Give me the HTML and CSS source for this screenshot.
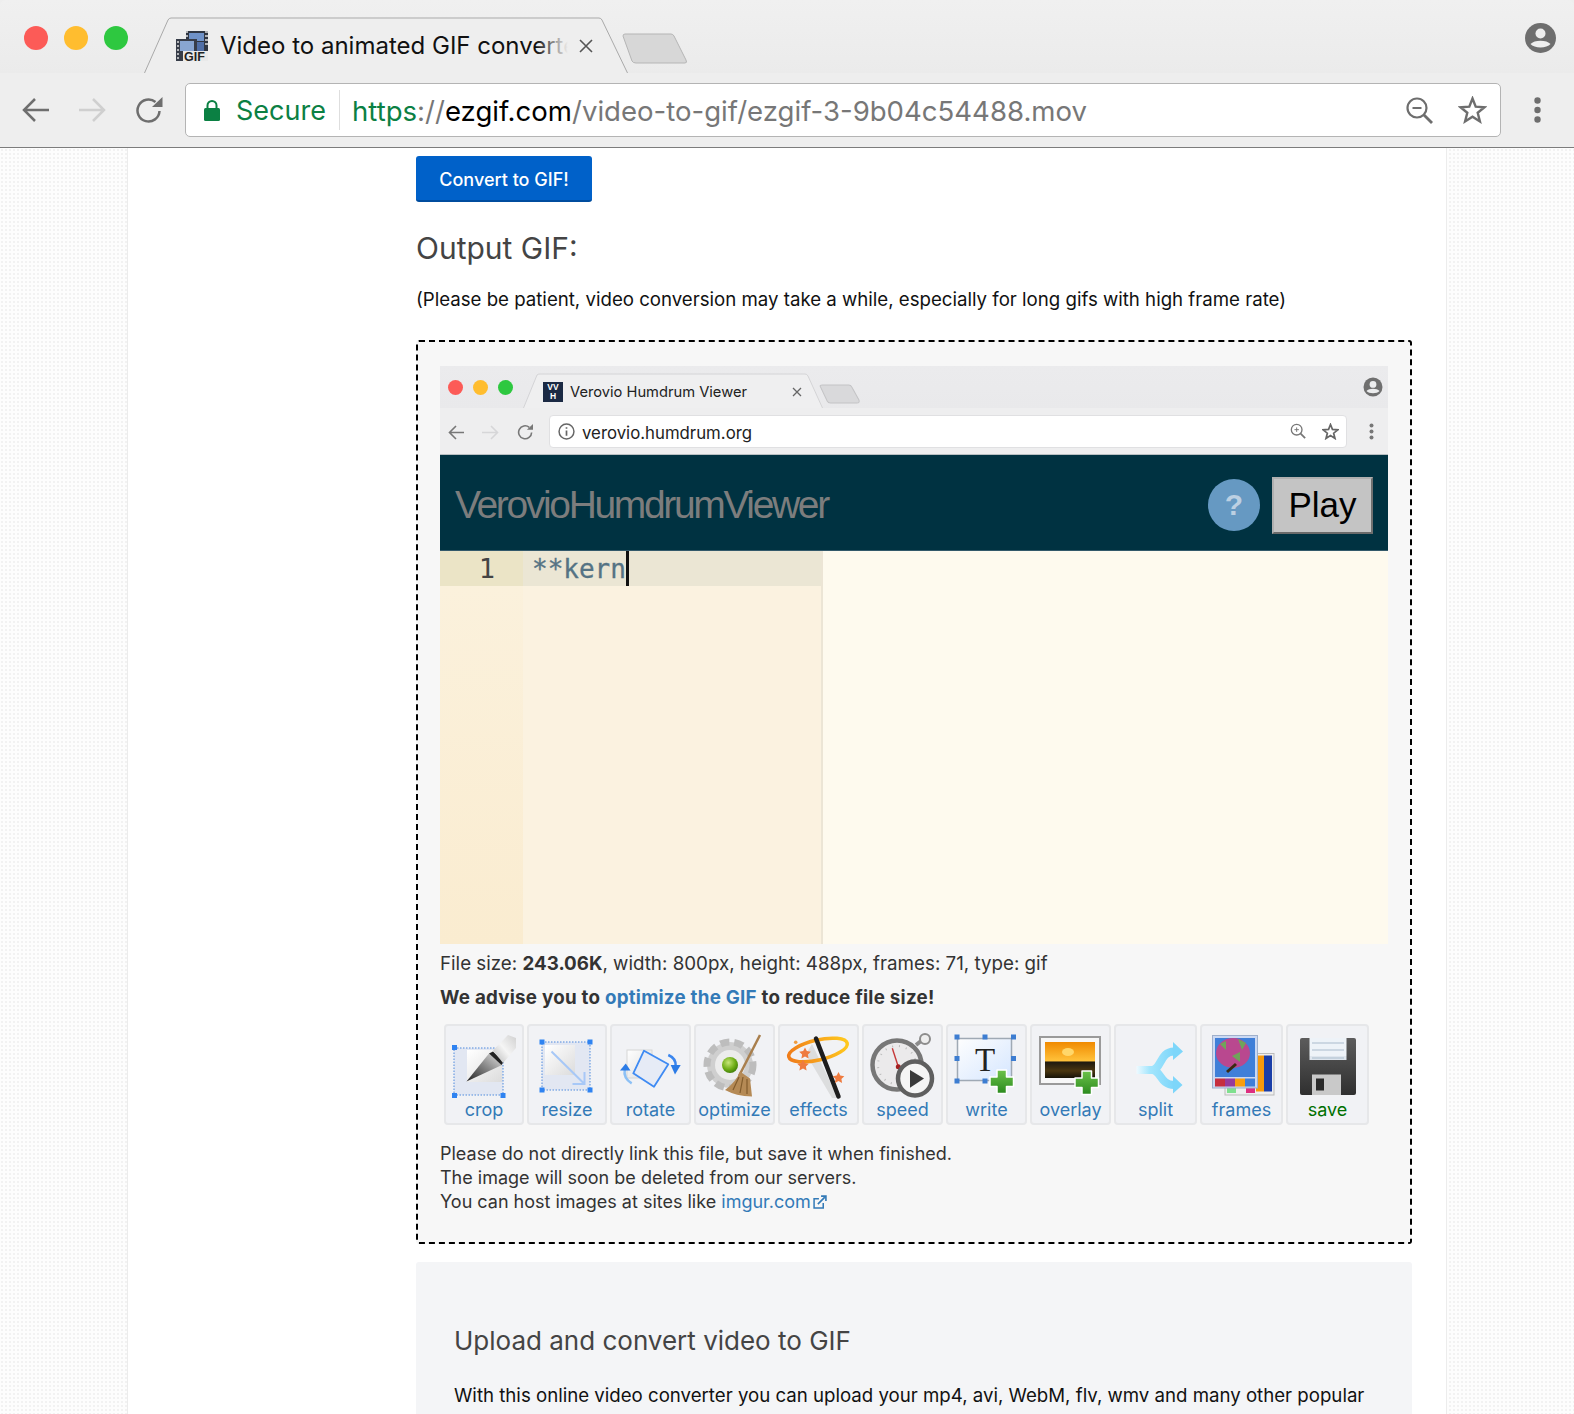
FILE: index.html
```html
<!DOCTYPE html>
<html lang="en">
<head>
<meta charset="utf-8">
<title>Video to animated GIF converter</title>
<link rel="stylesheet" href="styles.css">
</head>
<body>
<header class="chrome">
  <div class="tabstrip">
    <div class="lights"><i class="light red"></i><i class="light amber"></i><i class="light green"></i></div>
    <div class="tab">
      <svg class="tab-shape" width="484" height="56" viewBox="0 0 484 56"><path d="M0.500 56 L24 3 Q25 1 27 1 L455 1 Q457 1 458 3 L483.500 56" fill="#eeeeee" stroke="#a9a9a9"/></svg>
      <svg class="favicon" width="32" height="30" viewBox="0 0 32 30"><rect x="10" y="0" width="22" height="21" fill="#2f3642"/><rect x="13" y="2" width="15" height="8" fill="#6f92c8"/><rect x="13" y="11" width="15" height="9" fill="#4f6ea6"/><path d="M10 1 h2 M10 5 h2 M10 9 h2 M29 1 h3 M29 5 h3 M29 9 h3 M29 13 h3" stroke="#ddd" stroke-width="1.500"/><rect y="8" width="21" height="22" fill="#373d49"/><rect x="4" y="10" width="14" height="10" fill="#88a6d2"/><rect x="7" y="20" width="25" height="10" fill="#e9e9e9"/><path d="M1 11 h2 M1 15 h2 M1 19 h2 M1 23 h2 M1 27 h2" stroke="#ddd" stroke-width="1.500"/><text x="8" y="29.500" class="fav-text">GIF</text></svg>
      <span class="tab-title">Video to animated GIF converte</span>
      <span class="tab-fade"></span>
      <svg class="tab-x" width="14" height="14" viewBox="0 0 14 14"><path d="M1 1 L13 13 M13 1 L1 13" stroke="#555" stroke-width="1.600"/></svg>
    </div>
    <svg class="newtab" width="66" height="31" viewBox="0 0 66 31"><path d="M1 3 Q1 1 3 1 L49 1 Q51 1 52 3 L64 27 Q65.500 30 63 30 L14 30 Q11 30 10 28 Z" fill="#d7d7d7" stroke="#b5b5b5"/></svg>
    <svg class="profile" width="31" height="30" viewBox="0 0 31 30"><ellipse cx="15.500" cy="15" rx="15.500" ry="15" fill="#6e6e6e"/><circle cx="15.500" cy="10.500" r="5" fill="#eee"/><path d="M5.500 21 C9 16.500 22 16.500 25.500 21 C22 25.500 9 25.500 5.500 21 Z" fill="#eee"/></svg>
  </div>
  <div class="toolbar">
    <svg class="nav nav-back" width="27" height="24" viewBox="0 0 27 24"><path d="M27 12 H2.500 M13 1 L2 12 L13 23" fill="none" stroke="#6e6e6e" stroke-width="2.500"/></svg>
    <svg class="nav nav-off" width="27" height="24" viewBox="0 0 27 24"><path d="M0 12 H24.500 M14 1 L25 12 L14 23" fill="none" stroke="#cfcfcf" stroke-width="2.500"/></svg>
    <svg class="nav nav-reload" width="28" height="26" viewBox="0 0 28 26"><path d="M24.500 14 A11 11 0 1 1 20.500 5" fill="none" stroke="#6e6e6e" stroke-width="2.500"/><path d="M17 10 L27.500 10 L27.500 0 Z" fill="#6e6e6e"/></svg>
    <div class="omnibox">
      <svg class="lock" width="16" height="21" viewBox="0 0 16 21"><rect x="0" y="8" width="16" height="13" rx="1.500" fill="#0b8043"/><path d="M3.500 9 V5.500 A4.500 4.500 0 0 1 12.500 5.500 V9" fill="none" stroke="#0b8043" stroke-width="2"/></svg>
      <span class="secure">Secure</span>
      <span class="sep"></span>
      <span class="url"><span class="scheme">https</span><span class="dim">://</span><span class="host">ezgif.com</span><span class="dim">/video-to-gif/ezgif-3-9b04c54488.mov</span></span>
      <svg class="zoomicon" width="27" height="27" viewBox="0 0 27 27"><circle cx="11" cy="11" r="9.500" fill="none" stroke="#6e6e6e" stroke-width="2.200"/><path d="M6.500 11 H15.500" stroke="#6e6e6e" stroke-width="2"/><path d="M17.500 17.500 L26 26" stroke="#6e6e6e" stroke-width="2.800"/></svg>
      <svg class="star" width="29" height="28" viewBox="0 0 28 28"><path d="M14 2.500 L17.200 10.600 L26 11.200 L19.200 16.800 L21.400 25.400 L14 20.700 L6.600 25.400 L8.800 16.800 L2 11.200 L10.800 10.600 Z" fill="none" stroke="#6e6e6e" stroke-width="2.400"/></svg>
    </div>
    <svg class="dots" width="7" height="26" viewBox="0 0 7 26"><circle cx="3.500" cy="3.500" r="3.200" fill="#6e6e6e"/><circle cx="3.500" cy="13" r="3.200" fill="#6e6e6e"/><circle cx="3.500" cy="22.500" r="3.200" fill="#6e6e6e"/></svg>
  </div>
</header>
<div class="page">
  <main class="sheet">
    <div class="column">
      <button class="convert" type="button">Convert to GIF!</button>
      <h2 class="output-title">Output GIF:</h2>
      <p class="patience">(Please be patient, video conversion may take a while, especially for long gifs with high frame rate)</p>
      <section class="outfile">
        <div class="gif">
          <div class="g-strip">
            <div class="g-lights"><i class="g-light red"></i><i class="g-light amber"></i><i class="g-light green"></i></div>
            <div class="g-tab">
              <svg class="g-tab-shape" width="300" height="35" viewBox="0 0 300 35"><path d="M0.500 35 L14 2 Q15 1 17 1 L282 1 Q284 1 285 3 L299.500 35" fill="#efeff0" stroke="#d4d4d6"/></svg>
              <span class="g-fav"><span class="g-fav-t">VV</span><span class="g-fav-t">H</span></span>
              <span class="g-title">Verovio Humdrum Viewer</span>
              <svg class="g-x" width="10" height="10" viewBox="0 0 10 10"><path d="M1 1 L9 9 M9 1 L1 9" stroke="#666" stroke-width="1.300"/></svg>
            </div>
            <svg class="g-new" width="42" height="20" viewBox="0 0 41 20" preserveAspectRatio="none"><path d="M1 2 Q1 1 3 1 L29 1 Q31 1 32 3 L39 16 Q40 19 37 19 L11 19 Q9 19 8 17 Z" fill="#d9d9db" stroke="#c4c4c6"/></svg>
            <svg class="g-profile" width="20" height="20" viewBox="0 0 20 20"><circle cx="10" cy="10" r="9.500" fill="#6f6f6f"/><circle cx="10" cy="7.400" r="3.400" fill="#ecedee"/><path d="M3.500 14 C6 11 14 11 16.500 14 C14 17 6 17 3.500 14 Z" fill="#ecedee"/></svg>
          </div>
          <div class="g-bar">
            <svg class="g-nav" width="16" height="15" viewBox="0 0 16 15"><path d="M16 7.500 H1.500 M8 1 L1.500 7.500 L8 14" fill="none" stroke="#777" stroke-width="1.600"/></svg>
            <svg class="g-nav g-nav-off" width="17" height="15" viewBox="0 0 17 15"><path d="M0 7.500 H15.500 M9 1 L15.500 7.500 L9 14" fill="none" stroke="#d6d6d8" stroke-width="1.600"/></svg>
            <svg class="g-nav g-reload" width="17" height="16" viewBox="0 0 18 17"><path d="M15.500 9 A6.900 6.900 0 1 1 13 3.500" fill="none" stroke="#777" stroke-width="1.700"/><path d="M10.500 6 L17 6 L17 0 Z" fill="#777"/></svg>
            <div class="g-omni">
              <svg class="g-info" width="17" height="17" viewBox="0 0 16 16"><circle cx="8" cy="8" r="7" fill="none" stroke="#666" stroke-width="1.400"/><path d="M8 7 V12 M8 4 V5.500" stroke="#666" stroke-width="1.600"/></svg>
              <span class="g-url">verovio.humdrum.org</span>
              <svg class="g-zoom" width="16" height="16" viewBox="0 0 18 18"><circle cx="7.500" cy="7.500" r="6" fill="none" stroke="#777" stroke-width="1.500"/><path d="M5 7.500 H10 M7.500 5 V10" stroke="#777" stroke-width="1.100"/><path d="M12 12 L17 17" stroke="#777" stroke-width="2"/></svg>
              <svg class="g-star" width="17" height="17" viewBox="0 0 28 28"><path d="M14 2.500 L17.200 10.600 L26 11.200 L19.200 16.800 L21.400 25.400 L14 20.700 L6.600 25.400 L8.800 16.800 L2 11.200 L10.800 10.600 Z" fill="none" stroke="#666" stroke-width="2.800"/></svg>
            </div>
            <svg class="g-dots" width="5" height="17" viewBox="0 0 5 17"><circle cx="2.500" cy="2.500" r="2" fill="#777"/><circle cx="2.500" cy="8.500" r="2" fill="#777"/><circle cx="2.500" cy="14.500" r="2" fill="#777"/></svg>
          </div>
          <div class="g-head">
            <span class="g-brand">VerovioHumdrumViewer</span>
            <span class="g-help">?</span>
            <span class="g-play">Play</span>
          </div>
          <div class="g-body">
            <div class="g-editor">
              <div class="g-line"><span class="g-num">1</span><span class="g-code"><span class="g-code-t">**kern</span><i class="g-caret"></i></span></div>
              <div class="g-rest"><span class="g-gutter"></span></div>
            </div>
          </div>
        </div>
        <p class="filestats">File size: <b>243.06K</b>, width: 800px, height: 488px, frames: 71, type: gif</p>
        <p class="advice">We advise you to <a href="#">optimize the GIF</a> to reduce file size!</p>
        <nav class="tools">
          <a class="tool t-crop" href="#"><svg class="ti" viewBox="0 0 76 74">
            <defs><linearGradient id="paper" x1="0" y1="0" x2="1" y2="1"><stop offset="0" stop-color="#ffffff"/><stop offset="1" stop-color="#dcdcdc"/></linearGradient><linearGradient id="blade" x1="0" y1="1" x2="1" y2="0"><stop offset="0" stop-color="#222"/><stop offset=".55" stop-color="#8a8a8a"/><stop offset="1" stop-color="#e2e2e2"/></linearGradient><linearGradient id="grip" x1="0" y1="1" x2="1" y2="0"><stop offset="0" stop-color="#b5b5b5"/><stop offset=".5" stop-color="#f5f5f5"/><stop offset="1" stop-color="#d0d0d0"/></linearGradient></defs>
            <rect x="8" y="22" width="49" height="47" fill="#e2e7f2"/><rect x="8" y="22" width="49" height="47" fill="none" stroke="#4f8add" stroke-dasharray="1.500 1.500"/><rect x="21" y="24" width="35" height="32" fill="url(#paper)"/><path d="M20.500 55.500 L43 27.500 L56 39 Z" fill="url(#blade)"/><path d="M43 27.500 L47 25.500 L57.500 36 L55.500 39 Z" fill="#222"/><path d="M47 24.500 L62 9 L70 12 L70 22 L57 37 Z" fill="url(#grip)"/><g fill="#2f83f1"><rect x="6" y="19" width="5" height="5"/><rect x="6" y="67" width="5" height="5"/><rect x="54.500" y="67" width="5" height="5"/></g></svg><span>crop</span></a>
          <a class="tool t-resize" href="#"><svg class="ti" viewBox="0 0 76 74"><rect x="13" y="16" width="48" height="48" fill="#e2e7f2" stroke="#4f8add" stroke-dasharray="1.500 1.500"/><rect x="16" y="19" width="30" height="30" fill="url(#paper)"/><path d="M22.500 25.500 L55.500 58 M55.500 46 V58 H43.500" fill="none" stroke="#a7c8f7" stroke-width="2"/><g fill="#2f83f1"><rect x="10.500" y="13.500" width="5" height="5"/><rect x="58.500" y="13.500" width="5" height="5"/><rect x="10.500" y="61.500" width="5" height="5"/><rect x="58.500" y="61.500" width="5" height="5"/></g></svg><span>resize</span></a>
          <a class="tool t-rotate" href="#"><svg class="ti" viewBox="0 0 77 74"><rect x="15" y="24" width="25" height="28" fill="url(#paper)" stroke="#d6d6d6"/><path d="M32 24.700 L56.300 38.300 L42 60.700 L21.300 47.300 Z" fill="#e6ebf6" stroke="#3f8bf3" stroke-width="1.800" stroke-linejoin="round"/><path d="M19.700 57.300 C14 54 11.500 50 12.800 43" fill="none" stroke="#8cc0f5" stroke-width="2.500"/><path d="M8 44.500 L13.700 37.500 L18.500 44.500 Z" fill="#2b7be6"/><path d="M56.300 29 C61 31 64 34 63.700 40" fill="none" stroke="#3b86ee" stroke-width="2.500"/><path d="M58.700 39 L63 48.500 L68.700 39 Z" fill="#2b7be6"/></svg><span>rotate</span></a>
          <a class="tool t-optimize" href="#"><svg class="ti" viewBox="0 0 77 74"><defs><radialGradient id="ball" cx=".4" cy=".35" r=".7"><stop offset="0" stop-color="#c7e67a"/><stop offset=".6" stop-color="#6fae17"/><stop offset="1" stop-color="#3d7a08"/></radialGradient></defs><circle cx="34" cy="39" r="23" fill="#cfcfcf" stroke="#bdbdbd" stroke-width="7" stroke-dasharray="9 5"/><circle cx="34" cy="39" r="15" fill="#ececec"/><circle cx="34" cy="39" r="8" fill="url(#ball)"/><path d="M43 50 L64 9" stroke="#a97f4d" stroke-width="2.500"/><path d="M44 45.500 L54 52.500 L56 70.500 Q40 70 29 64 Q40 56 44 45.500 Z" fill="#b58a55"/><path d="M43 51 L37 64 M47 51 L44 67 M51 53 L51 68" stroke="#825c2c" stroke-width="1.200"/></svg><span>optimize</span></a>
          <a class="tool t-effects" href="#"><svg class="ti" viewBox="0 0 77 74"><defs><linearGradient id="ring" x1="0" y1="0" x2="1" y2="0"><stop offset="0" stop-color="#f07d1a"/><stop offset="1" stop-color="#ffc81e"/></linearGradient></defs><path d="M32 18 L26 28 L52 72 L58 72 Z" fill="#cfcfcf" opacity=".6"/><ellipse cx="38" cy="24" rx="30" ry="10" transform="rotate(-13 38 24)" fill="none" stroke="url(#ring)" stroke-width="3.500"/><path d="M36 12.500 L58.500 70.500" stroke="#1d1d1d" stroke-width="4.500" stroke-linecap="round"/><g fill="#ef7b3f"><path d="M25 21.500 l1.800 3.600 4 .6 -2.900 2.800 .7 4 -3.600 -1.900 -3.600 1.900 .7 -4 -2.900 -2.800 4 -.6 Z"/><path d="M23 33.500 l1.800 3.600 4 .6 -2.900 2.800 .7 4 -3.600 -1.900 -3.600 1.900 .7 -4 -2.900 -2.800 4 -.6 Z"/><path d="M58.500 46 l1.800 3.600 4 .6 -2.900 2.800 .7 4 -3.600 -1.900 -3.600 1.900 .7 -4 -2.900 -2.800 4 -.6 Z"/></g><circle cx="15.700" cy="16.300" r="1.800" fill="#ef9c3f"/></svg><span>effects</span></a>
          <a class="tool t-speed" href="#"><svg class="ti" viewBox="0 0 77 74"><path d="M52 19 L57 15" stroke="#8c8c8c" stroke-width="4"/><circle cx="61" cy="13" r="5" fill="#eee" stroke="#8c8c8c" stroke-width="2"/><circle cx="33" cy="39" r="24.500" fill="#ebeaeb" stroke="#777" stroke-width="4.500"/><circle cx="33" cy="39" r="19" fill="none" stroke="#bbb" stroke-width="2" stroke-dasharray="1 6"/><path d="M28.300 22.300 L34.300 40.700" stroke="#c63a3a" stroke-width="1.400"/><circle cx="34.300" cy="40.700" r="2.500" fill="#a51f1f"/><circle cx="51" cy="52.500" r="17" fill="#f5f5f5" stroke="#5f5f5f" stroke-width="4.500"/><path d="M46 44 L60 52.500 L46 61.700 Z" fill="#3a3a3a"/></svg><span>speed</span></a>
          <a class="tool t-write" href="#"><svg class="ti" viewBox="0 0 77 74"><defs><linearGradient id="sky" x1="0" y1="0" x2="1" y2="1"><stop offset="0" stop-color="#fefefe"/><stop offset="1" stop-color="#d5e6ff"/></linearGradient><linearGradient id="plus" x1="0" y1="0" x2="0" y2="1"><stop offset="0" stop-color="#6cc24a"/><stop offset="1" stop-color="#2b8a1e"/></linearGradient></defs><rect x="9.500" y="12.500" width="54" height="42" fill="url(#sky)" stroke="#9fa9b4" stroke-width="1.500"/><text x="37" y="45" class="t-t">T</text><g fill="#3d7dd1"><rect x="6.500" y="8.500" width="5" height="5"/><rect x="34.500" y="8.500" width="5" height="5"/><rect x="63" y="8.500" width="5" height="5"/><rect x="6.500" y="30" width="5" height="5"/><rect x="63" y="30" width="5" height="5"/><rect x="6.500" y="52.500" width="5" height="5"/><rect x="34.500" y="52.500" width="5" height="5"/></g><path d="M49 44 H58.500 V51 H65.500 V60.500 H58.500 V67.500 H49 V60.500 H42 V51 H49 Z" fill="url(#plus)" stroke="#fff" stroke-width="1.500" stroke-linejoin="round"/></svg><span>write</span></a>
          <a class="tool t-overlay" href="#"><svg class="ti" viewBox="0 0 77 74"><defs><linearGradient id="sunset" x1="0" y1="0" x2="0" y2="1"><stop offset="0" stop-color="#f08a00"/><stop offset=".52" stop-color="#ffc13a"/><stop offset=".56" stop-color="#1f1a10"/><stop offset=".8" stop-color="#4a3610"/><stop offset="1" stop-color="#171308"/></linearGradient></defs><rect x="8" y="11" width="60" height="47" fill="#f7f7f7" stroke="#9a9a9a" stroke-width="2"/><rect x="13" y="16" width="50" height="36" fill="url(#sunset)"/><ellipse cx="36" cy="26" rx="6" ry="4" fill="#ffd76a"/><path d="M50 45 H59.500 V52 H66.500 V61.500 H59.500 V68.500 H50 V61.500 H43 V52 H50 Z" fill="url(#plus)" stroke="#fff" stroke-width="1.500" stroke-linejoin="round"/></svg><span>overlay</span></a>
          <a class="tool t-split" href="#"><svg class="ti" viewBox="0 0 79 74"><defs><linearGradient id="cyan" x1="0" y1="0" x2="1" y2="0"><stop offset="0" stop-color="#eefaff"/><stop offset=".35" stop-color="#a4e6fd"/><stop offset="1" stop-color="#7dd6fa"/></linearGradient></defs><path d="M20.500 44 H36 C45 44 44 25.500 58 25.500 M36 44 C45 44 44 59 58 59" fill="none" stroke="url(#cyan)" stroke-width="8"/><path d="M57 16 L67 25.500 L57 34 Z M57 50 L66.500 59 L57 67.500 Z" fill="#7dd6fa"/></svg><span>split</span></a>
          <a class="tool t-frames" href="#"><svg class="ti" viewBox="0 0 79 74"><rect x="23" y="27.500" width="49" height="41.500" fill="#efefef" stroke="#bbb"/><rect x="54" y="29.500" width="8" height="36" fill="#f79a0c"/><rect x="62" y="29.500" width="8" height="36" fill="#1a3ea8"/><rect x="25" y="62" width="9" height="5" fill="#7fe08f"/><rect x="44" y="62" width="9" height="5" fill="#dd2f7f"/><rect x="10.500" y="9.500" width="45" height="52.500" fill="#cbd9f3" stroke="#9fb0cc"/><rect x="13" y="12" width="40" height="39" fill="#3f7fd8"/><ellipse cx="31" cy="27" rx="17" ry="15" fill="#b9488f"/><path d="M18 18 L24 15 L24 24 Z M36 13 L44 17 L40 24 Z M30 30 L38 26 L38 36 Z" fill="#6fa45a"/><path d="M34 38 L25 46" stroke="#3a2a10" stroke-width="3"/><rect x="13" y="52.500" width="10" height="8" fill="#c62f3f"/><rect x="23" y="52.500" width="10" height="8" fill="#963b9c"/><rect x="33" y="52.500" width="10" height="8" fill="#f89e0f"/><rect x="43" y="52.500" width="10" height="8" fill="#3f7fd8"/></svg><span>frames</span></a>
          <a class="tool t-save" href="#"><svg class="ti" viewBox="0 0 79 74"><defs><linearGradient id="disk" x1="0" y1="0" x2="0" y2="1"><stop offset="0" stop-color="#5c5c5c"/><stop offset="1" stop-color="#2f2f2f"/></linearGradient></defs><path d="M14 12 H66 Q68 12 68 14 V67 Q68 69 66 69 H14 Q12 69 12 67 V14 Q12 12 14 12 Z" fill="url(#disk)"/><rect x="21.500" y="12" width="37" height="18" fill="#eef3f8"/><rect x="21.500" y="30" width="37" height="4" fill="#dfe6ee"/><path d="M24 17 H56 M24 24 H56 M24 32 H56" stroke="#a9bccb" stroke-width="1.200"/><rect x="24" y="48.500" width="29" height="20.500" fill="#c9c9c9"/><rect x="28" y="52.500" width="8" height="12" fill="#2a2a2a"/></svg><span>save</span></a>
        </nav>
        <p class="notice">Please do not directly link this file, but save it when finished.<br>The image will soon be deleted from our servers.<br>You can host images at sites like <a href="#">imgur.com<svg class="ext" width="13" height="13" viewBox="0 0 13 13"><path d="M9.500 7.500 V12 H1 V3.500 H5.500" fill="none" stroke="#337ab7" stroke-width="1.400"/><path d="M4.500 8.500 L11 2 M7.500 1 H12 V5.500" fill="none" stroke="#337ab7" stroke-width="1.500"/></svg></a></p>
      </section>
      <section class="about">
        <h2 class="about-title">Upload and convert video to GIF</h2>
        <p class="about-text">With this online video converter you can upload your mp4, avi, WebM, flv, wmv and many other popular types of video and rich media files to turn them into high-quality animated GIFs.</p>
      </section>
    </div>
  </main>
</div>
</body>
</html>
```
FILE: styles.css
```css
* { box-sizing: border-box; }
html, body { margin: 0; height: 1414px; overflow: hidden; background: #fff; }
body { font-family: Inter, "Liberation Sans", Arial, sans-serif; color: #000; }
a { color: #337ab7; text-decoration: none; }
p, h2 { margin: 0; font-weight: normal; }

.chrome { height: 148px; background: #eeeeee; border-bottom: 1px solid #7c7c7c; }
.tabstrip { height: 73px; display: flex; align-items: flex-start; background: linear-gradient(#f0f0f0, #ebebeb); border-radius: 6px 6px 0 0; }
.lights { display: flex; gap: 16px; padding: 26px 0 0 24px; width: 144px; flex: none; }
.light { width: 24px; height: 24px; border-radius: 50%; display: block; }
.red { background: #fc5b57; }
.amber { background: #ffbd2f; }
.green { background: #2ec840; }
.tab { width: 484px; height: 56px; margin-top: 17px; position: relative; flex: none; display: flex; align-items: center; padding: 1px 0 0 32px; }
.tab-shape { position: absolute; left: 0; top: 0; }
.favicon, .tab-title, .tab-x { position: relative; flex: none; }
.fav-text { font: bold 12.500px "Liberation Sans", sans-serif; fill: #222; }
.tab-title { font-size: 24px; margin-left: 12px; white-space: nowrap; width: 359px; color: #111; }
.tab-fade { position: absolute; left: 392px; top: 12px; width: 42px; height: 36px; background: linear-gradient(90deg, rgba(238,238,238,0), #eeeeee 76%); }
.newtab { margin: 33px 0 0 -6px; flex: none; }
.profile { margin: 23px 18px 0 auto; flex: none; }

.toolbar { height: 74px; display: flex; align-items: center; padding-left: 22px; }
.nav { flex: none; display: block; margin-right: 29px; }
.nav-back { margin-right: 30px; }
.nav-reload { margin-right: 22px; }
.omnibox { width: 1316px; height: 54px; flex: none; background: #fff; border: 1px solid #b4b4b4; border-radius: 5px; display: flex; align-items: center; padding-left: 18px; }
.lock { flex: none; }
.secure { color: #0b8043; font-size: 27px; margin-left: 16px; width: 88px; white-space: nowrap; }
.sep { width: 1px; height: 40px; background: #dedede; margin: 0 12px 0 15px; flex: none; }
.url { font-size: 27.570px; flex: 1; white-space: nowrap; padding-top: 1px; }
.scheme { color: #0b8043; }
.dim { color: #777; }
.host { color: #000; }
.zoomicon { flex: none; margin-right: 25px; }
.star { flex: none; margin-right: 13px; }
.dots { flex: none; margin-left: 33px; }

.page { height: 1266px; background-color: #fdfdfd; background-image: radial-gradient(#f2f2f2 1px, transparent 1px); background-size: 4px 4px; padding: 0 127px; overflow: hidden; }
.sheet { width: 1320px; height: 100%; background: #fff; border-left: 1px solid #ececec; border-right: 1px solid #ececec; padding: 8px 0 0 288px; }
.column { width: 996px; }

.convert { display: block; width: 176px; height: 46px; padding: 2px 0 0; background: #0061c9; color: #fff; border: 0; border-bottom: 2px solid #004c9e; border-radius: 3px; font: 500 18px Inter, "Liberation Sans", sans-serif; }
.output-title { font-size: 30px; line-height: 40px; color: #444; margin-top: 26px; }
.patience { font-size: 18.650px; line-height: 24px; margin-top: 19px; color: #111; }
.outfile { margin-top: 29px; height: 904px; background: #f7f7f7; border: 2px dashed #000; border-radius: 3px; padding: 24px 22px 0; font-size: 18px; line-height: 24px; color: #333; }

.gif { width: 948px; height: 578px; background: #fefaee; display: flex; flex-direction: column; overflow: hidden; }
.g-strip { height: 42px; background: linear-gradient(#ebebed, #e9e9eb); display: flex; align-items: flex-start; flex: none; }
.g-lights { display: flex; gap: 10px; padding: 14px 0 0 8px; width: 83px; flex: none; }
.g-light { width: 15px; height: 15px; border-radius: 50%; display: block; }
.g-tab { width: 300px; height: 35px; margin-top: 7px; position: relative; flex: none; display: flex; align-items: center; padding: 3px 0 0 20px; }
.g-tab-shape { position: absolute; left: 0; top: 0; }
.g-fav { position: relative; width: 20px; height: 20px; background: #1b2a44; display: flex; flex-direction: column; align-items: center; justify-content: center; flex: none; }
.g-fav-t { color: #fff; font: bold 8.500px/9px "Liberation Sans", sans-serif; }
.g-title { position: relative; margin-left: 7px; font-size: 14.700px; line-height: 20px; color: #222; width: 222px; white-space: nowrap; flex: none; }
.g-x { position: relative; flex: none; }
.g-new { flex: none; margin: 18px 0 0 -4px; }
.g-profile { margin: 11px 5px 0 auto; flex: none; }
.g-bar { height: 47px; flex: none; background: #eeeeef; border-bottom: 1px solid #b9bfc2; display: flex; align-items: center; padding: 0 0 0 8px; }
.g-nav { flex: none; margin: 2px 18px 0 0; }
.g-reload { margin-right: 15px; }
.g-omni { width: 798px; height: 33px; background: #fff; border-radius: 4px; border: 1px solid #e0e0e2; display: flex; align-items: center; padding-left: 8px; flex: none; }
.g-info { flex: none; }
.g-url { font-size: 16.800px; color: #222; margin-left: 7px; flex: 1; white-space: nowrap; padding-top: 3px; }
.g-zoom { margin-right: 16px; flex: none; }
.g-star { margin-right: 7px; flex: none; }
.g-dots { margin-left: 22px; flex: none; }
.g-head { height: 96px; flex: none; background: #003241; display: flex; align-items: center; padding: 5px 15px 0 15px; border-bottom: 1px solid #33596a; }
.g-brand { font: 39px "Liberation Sans", sans-serif; color: #7c7d7d; letter-spacing: -2.350px; flex: 1; white-space: nowrap; }
.g-help { width: 52px; height: 52px; border-radius: 50%; background: #6699c2; color: #bcd0e2; font: bold 30px/52px "Liberation Sans", sans-serif; text-align: center; margin-right: 12px; flex: none; }
.g-play { width: 101px; height: 57px; background: #c4c4c4; color: #000; font: 35px/52px "Liberation Sans", sans-serif; text-align: center; border: 2px solid #b0b0b0; border-right-color: #707070; border-bottom-color: #6a6a6a; flex: none; }
.g-body { flex: 1; display: flex; min-height: 0; }
.g-editor { width: 383px; display: flex; flex-direction: column; background: #fbf2e0; border-right: 2px solid #ece5d5; }
.g-line { height: 35px; display: flex; background: #ebe6d4; flex: none; font: 27px/35px "DejaVu Sans Mono", monospace; }
.g-num { width: 83px; background: #ebe4c6; text-align: right; padding-right: 28px; color: #444; flex: none; }
.g-code { padding-left: 9px; color: #557384; display: flex; font-size: 26px; line-height: 37px; -webkit-text-stroke: .3px #557384; }
.g-code-t { display: block; }
.g-caret { width: 3px; height: 35px; background: #111; display: block; }
.g-rest { flex: 1; display: flex; }
.g-gutter { width: 83px; background: linear-gradient(#fbf1dc, #faecd0); }

.filestats { margin-top: 8px; font-size: 18.750px; }
.advice { font-weight: bold; margin-top: 10px; font-size: 18.750px; letter-spacing: .25px; }
.tools { display: flex; gap: 3px; margin: 14px 0 0 4px; }
.tool { flex: none; height: 101px; background: #f1f2f5; border: 2px solid #e6e7e9; border-radius: 4px; display: flex; flex-direction: column; align-items: center; color: #337ab7; font-size: 18px; line-height: 20px; white-space: nowrap; }
.ti { display: block; width: 100%; height: 74px; flex: none; overflow: visible; }
.t-crop, .t-resize { width: 80px; }
.t-rotate, .t-optimize, .t-effects, .t-speed, .t-write, .t-overlay { width: 81px; }
.t-split, .t-frames, .t-save { width: 83px; }
.t-save { color: #007000; }
.t-t { font: 33px "Liberation Serif", serif; text-anchor: middle; fill: #222; }
.notice { margin-top: 17px; }
.ext { margin-left: 2px; vertical-align: -1px; width: 14px; height: 14px; }

.about { margin-top: 18px; height: 300px; background: #f4f5f7; border-radius: 3px; padding: 59px 38px 0; }
.about-title { font-size: 26px; line-height: 40px; color: #444; }
.about-text { font-size: 18.650px; line-height: 27px; color: #111; margin-top: 21px; width: 925px; }
```
